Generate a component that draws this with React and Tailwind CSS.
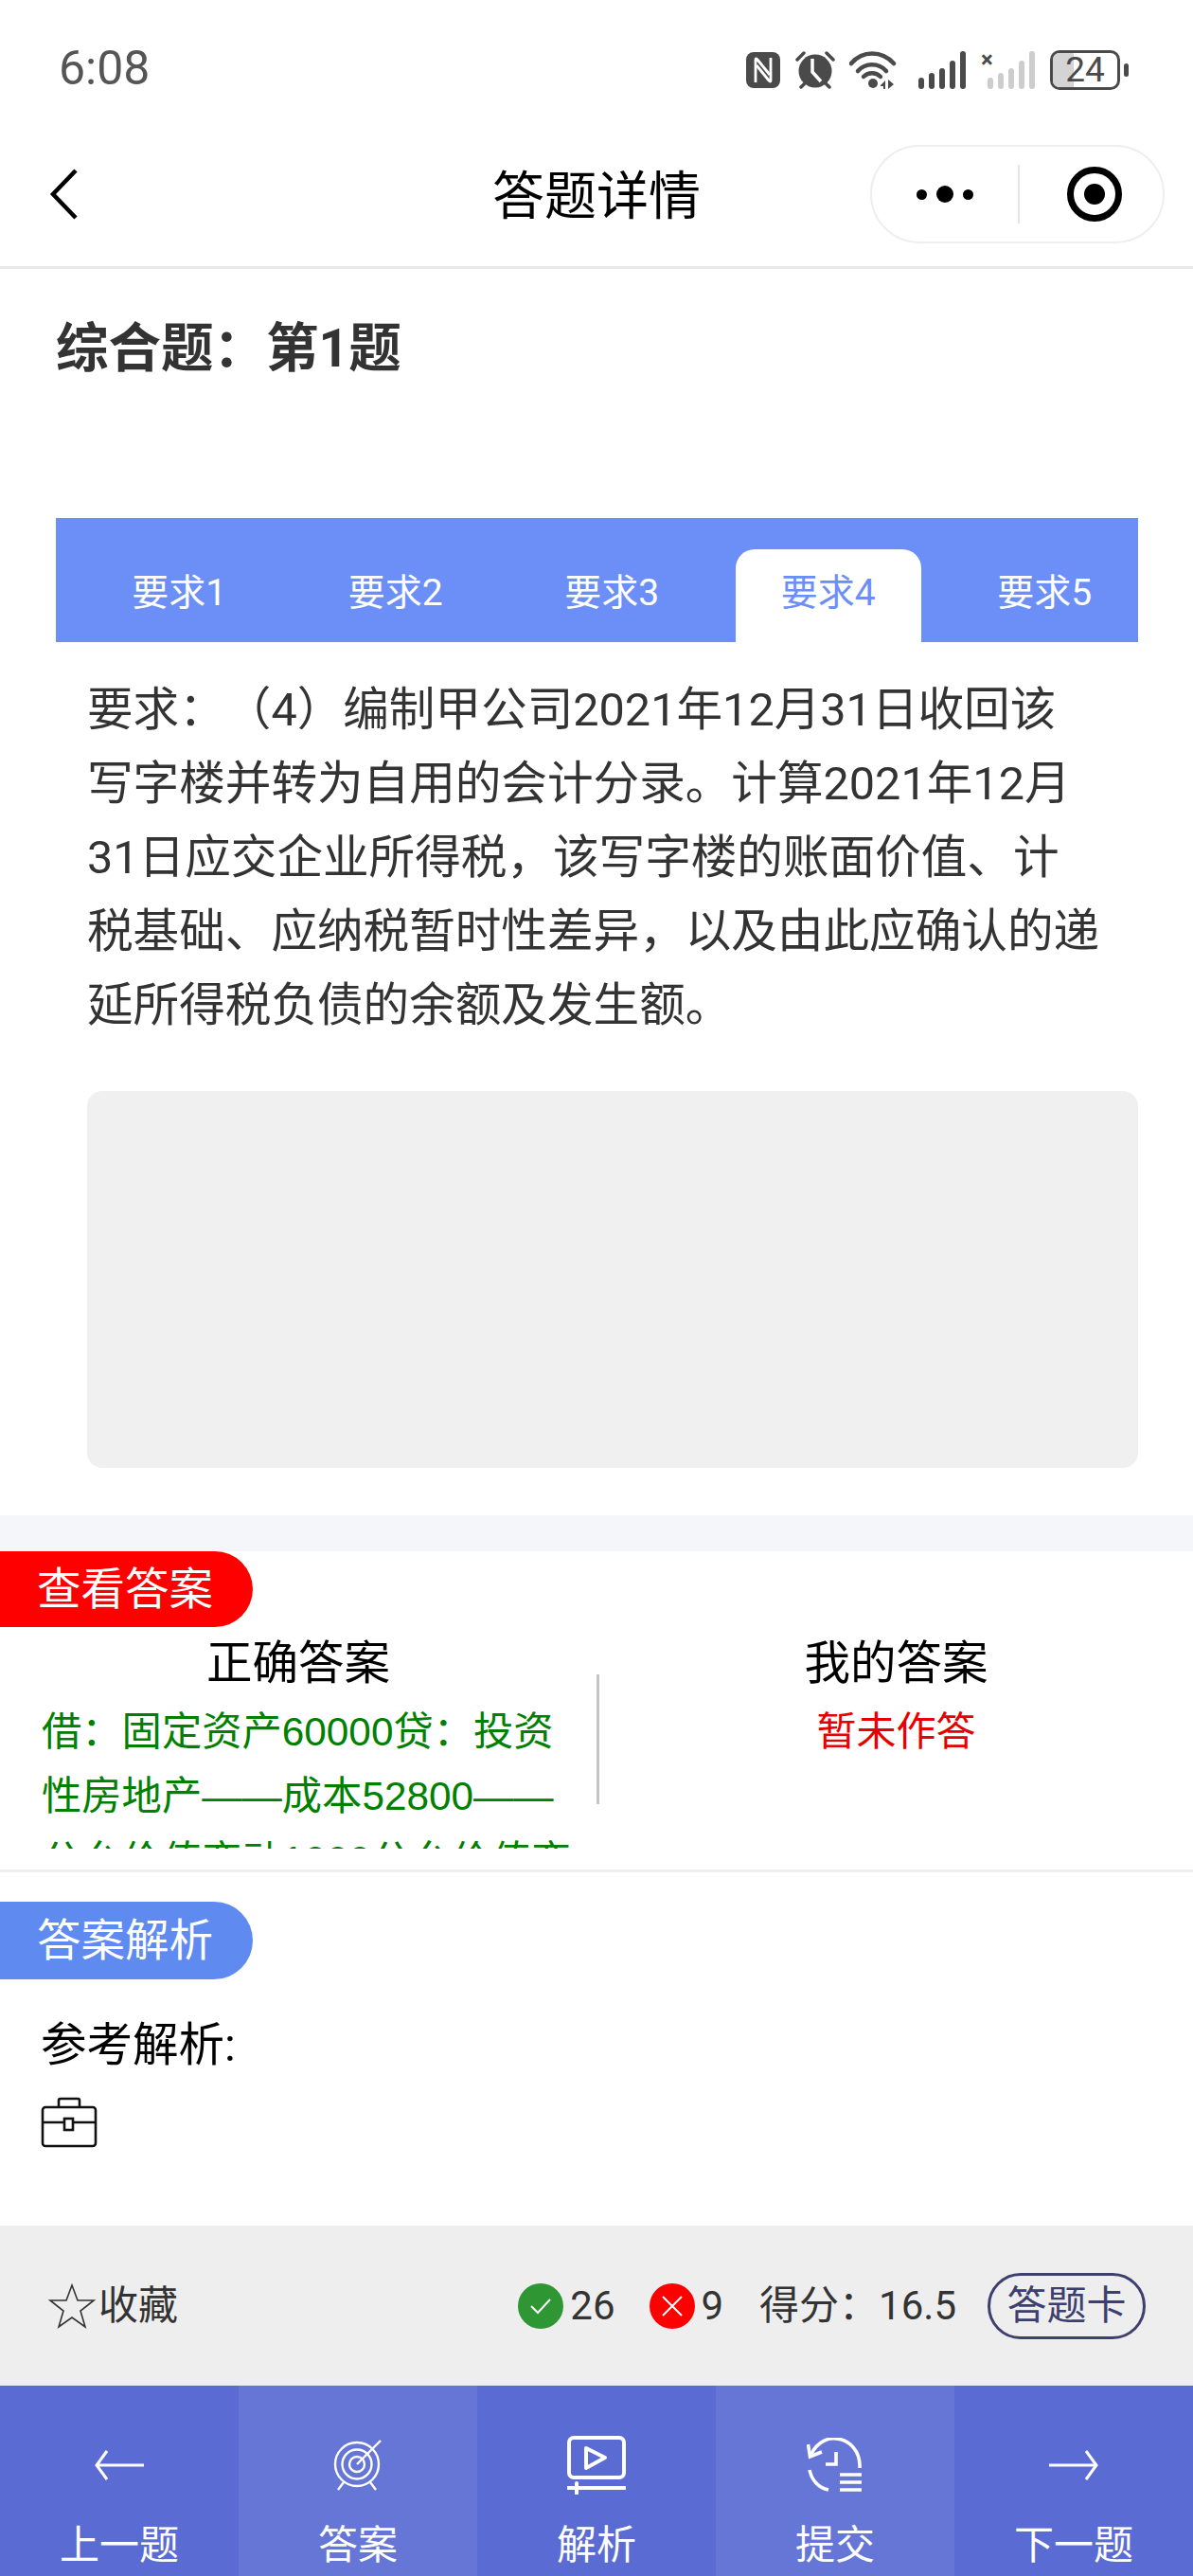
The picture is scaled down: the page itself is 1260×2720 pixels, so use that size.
const TABS = ["要求1", "要求2", "要求3", "要求4", "要求5"];

const NfcIcon = () => (
  <svg width="36" height="38" viewBox="0 0 36 38">
    <rect x="0" y="0" width="36" height="38" rx="8" fill="#4a4a4a" />
    <g fill="none" stroke="#fff" strokeWidth="2.8" strokeLinejoin="round">
      <path d="M10 32 V8 Q10 6 12 8 L25 24" />
      <path d="M26 6 V30 Q26 32 24 30 L11 14" />
    </g>
  </svg>
);

const AlarmIcon = () => (
  <svg width="42" height="40" viewBox="0 0 42 40">
    <circle cx="21" cy="21" r="17.5" fill="#4a4a4a" />
    <path d="M18 8 V22 L27 32" fill="none" stroke="#fff" strokeWidth="3.5" />
    <path d="M2 9 L9 2 M40 9 L33 2 M6 38 L10 34 M36 38 L32 34" stroke="#4a4a4a" strokeWidth="3.5" strokeLinecap="round" />
  </svg>
);

const WifiIcon = () => (
  <svg width="50" height="40" viewBox="0 0 50 40">
    <g fill="none" stroke="#4a4a4a" strokeWidth="4.5" strokeLinecap="round">
      <path d="M2 13 C14 -1 34 -1 47 13" />
      <path d="M9 21 C17 12 31 12 39 21" />
      <path d="M15 27 C20 22 28 22 33 27" />
    </g>
    <circle cx="25" cy="34" r="5" fill="#4a4a4a" />
    <path d="M33 36 L38 31 V40 H36 V37 H33 Z M41 30 V40 L47 35 Z" fill="#4a4a4a" />
  </svg>
);

const SignalIcon = ({ color = "#4a4a4a" }) => (
  <svg width="50" height="40" viewBox="0 0 50 40">
    <rect x="0" y="28" width="6" height="12" rx="3" fill={color} />
    <rect x="11" y="23" width="6" height="17" rx="3" fill={color} />
    <rect x="22" y="18" width="6" height="22" rx="3" fill={color} />
    <rect x="33" y="10" width="6" height="30" rx="3" fill={color} />
    <rect x="44" y="0" width="6" height="40" rx="3" fill={color} />
  </svg>
);

const TargetIcon = () => (
  <svg width="52" height="54" viewBox="0 0 52 54" fill="none" stroke="#fff" strokeWidth="2.4">
    <circle cx="25" cy="26" r="23" />
    <circle cx="25" cy="26" r="15.5" />
    <circle cx="25" cy="26" r="8" />
    <path d="M25 26 L50 1" />
    <path d="M11 45 L5 53 M39 45 L45 53" />
  </svg>
);

const VideoIcon = () => (
  <svg width="62" height="62" viewBox="0 0 62 62" fill="none" stroke="#fff" strokeWidth="4">
    <rect x="2" y="2" width="58" height="42" rx="5" />
    <path d="M20 13 L40 23 L20 34 Z" strokeLinejoin="round" />
    <path d="M0 55 H61" strokeLinecap="round" />
    <path d="M10 50 V61" strokeLinecap="round" />
  </svg>
);

const SubmitIcon = () => (
  <svg width="60" height="58" viewBox="0 0 60 58" fill="none" stroke="#fff" strokeWidth="3.6">
    <path d="M5 17 C12 3 24 0 31 1 C45 2 57 14 56 32" />
    <path d="M1.5 7 L3.5 20 L16 15" />
    <path d="M31 15 V28 H20" />
    <path d="M3 34 C5 44 12 53 23 55" />
    <path d="M35 39 H58 M35 47 H58 M35 55 H58" />
  </svg>
);

const NavItem = ({ label, light, children }) => (
  <div className={`flex flex-col items-center ${light ? "bg-[#6676d6]" : "bg-[#5a6bd3]"}`}>
    <div className="flex h-[139px] items-center justify-center pt-[28px]">{children}</div>
    <div className="text-[42px] leading-[60px] text-white">{label}</div>
  </div>
);

export default function App() {
  return (
    <div className="flex h-[2720px] w-[1260px] flex-col overflow-hidden bg-white font-['Roboto','Noto_Sans_CJK_SC',sans-serif] [text-spacing-trim:space-all]">
      {/* status bar */}
      <div className="flex h-[145px] items-start justify-between pl-[62px] pr-[68px] pt-[44px]">
        <div className="text-[50px] leading-[56px] text-[#555]">6:08</div>
        <div className="mt-[9px] flex items-center">
          <NfcIcon />
          <div className="ml-[16px]"><AlarmIcon /></div>
          <div className="ml-[15px]"><WifiIcon /></div>
          <div className="ml-[23px]"><SignalIcon /></div>
          <div className="relative ml-[16px] w-[57px]">
            <div className="flex justify-end"><SignalIcon color="#cdcdcd" /></div>
            <span className="absolute left-0 top-[-3px] text-[24px] font-bold leading-[24px] text-[#4a4a4a]">×</span>
          </div>
          <div className="relative ml-[16px] h-[42px] w-[74px] overflow-hidden rounded-[10px] border-[3px] border-[#4a4a4a] text-center text-[37px] leading-[36px] text-[#4a4a4a]">
            <div className="absolute inset-y-0 left-0 w-[22px] bg-[#d4d4d4]" />
            <span className="relative">24</span>
          </div>
          <div className="ml-[4px] h-[14px] w-[5px] rounded-full bg-[#4a4a4a]" />
        </div>
      </div>

      {/* nav */}
      <div className="border-b-[3px] border-[#e8e8e8] pb-[16px]">
        <div className="relative flex h-[120px] items-center justify-center">
          <svg className="absolute left-[52px] top-[33px]" width="30" height="54" viewBox="0 0 30 54" fill="none" stroke="#000" strokeWidth="4.5">
            <path d="M28 2 L4 27 L28 52" />
          </svg>
          <div className="mt-[3px] text-[55px] leading-[64px] text-black">答题详情</div>
          <div className="absolute left-[919px] top-[8px] flex h-[104px] w-[311px] items-center rounded-full border-2 border-[#eeeeee] bg-white">
            <div className="flex w-[154px] items-center justify-center gap-[10px]">
              <span className="h-[11px] w-[11px] rounded-full bg-black" />
              <span className="h-[18px] w-[18px] rounded-full bg-black" />
              <span className="h-[11px] w-[11px] rounded-full bg-black" />
            </div>
            <div className="h-[62px] w-[2px] bg-[#e5e5e5]" />
            <div className="ml-[50px] flex h-[58px] w-[58px] items-center justify-center rounded-full border-[7px] border-black">
              <span className="h-[22px] w-[22px] rounded-full bg-black" />
            </div>
          </div>
        </div>
      </div>

      {/* title */}
      <div className="ml-[59px] mt-[55px] text-[55.5px] font-bold leading-[60px] text-[#333]">综合题：第1题</div>

      {/* tabs */}
      <div className="ml-[59px] mr-[58px] mt-[148px] flex h-[131px] items-end overflow-hidden bg-[#6c8ff7] pl-[16px]">
        {TABS.map((t, i) => (
          <div key={t} className="flex w-[228.5px] shrink-0 justify-center">
            <div className={`h-[98px] w-[196px] rounded-t-[20px] pt-[19px] text-center text-[39px] leading-[54px] ${i === 3 ? "bg-white text-[#6c8ff7]" : "text-white"}`}>
              {t}
            </div>
          </div>
        ))}
      </div>

      <div className="ml-[92px] mt-[33px] w-[1070px] text-[48.6px] leading-[78px] text-[#333]">
        要求：（4）编制甲公司2021年12月31日收回该写字楼并转为自用的会计分录。计算2021年12月31日应交企业所得税，该写字楼的账面价值、计税基础、应纳税暂时性差异，以及由此应确认的递延所得税负债的余额及发生额。
      </div>

      <div className="ml-[92px] mt-[51px] h-[398px] w-[1110px] rounded-[16px] bg-[#f0f0f0]" />

      <div className="mt-[50px] h-[38px] bg-[#f5f6fa]" />

      {/* answers */}
      <div className="h-[339px] border-b-[3px] border-[#eeeeee]">
        <div className="flex h-[80px] w-[267px] items-center rounded-r-[40px] bg-[#ff0000] pl-[39px] text-[46.5px] leading-[60px] text-white">查看答案</div>
        <div className="mt-[9px] flex">
          <div className="w-[630px]">
            <div className="text-center text-[48.5px] leading-[60px] text-black">正确答案</div>
            <div className="ml-[44px] mt-[8px] h-[157px] w-[565px] overflow-hidden font-['Liberation_Sans','Noto_Sans_CJK_SC',sans-serif] text-[42.3px] leading-[68px] text-[#008000]">
              借：固定资产60000贷：投资性房地产——成本52800——公允价值变动1000公允价值变
            </div>
          </div>
          <div className="mt-[41px] h-[137px] w-[3px] bg-[#c4c4c4]" />
          <div className="flex-1 text-center">
            <div className="text-[48.5px] leading-[60px] text-black">我的答案</div>
            <div className="mt-[8px] text-[42px] leading-[68px] text-[#e60000]">暂未作答</div>
          </div>
        </div>
      </div>

      {/* analysis */}
      <div className="mt-[31px] flex h-[82px] w-[267px] items-center rounded-r-full bg-[#5f8bf0] pl-[39px] text-[46.5px] leading-[60px] text-white">答案解析</div>
      <div className="ml-[43px] mt-[40px] text-[48.5px] leading-[60px] text-black">参考解析:</div>
      <svg className="ml-[43px] mt-[24px]" width="60" height="54" viewBox="0 0 60 54" fill="none" stroke="#111" strokeWidth="2.6">
        <rect x="2" y="11" width="56" height="41" rx="3" />
        <path d="M19 11 V4 Q19 2 21 2 H39 Q41 2 41 4 V11" />
        <path d="M2 27 H25 M35 27 H58" />
        <rect x="25" y="23" width="9" height="12" />
      </svg>

      {/* footer */}
      <div className="mt-auto">
        <div className="flex h-[169px] items-center justify-between bg-[#eeeeee] pl-[51px] pr-[50px] text-[42px] leading-[56px] text-[#333]">
          <div className="flex items-center">
            <svg width="50" height="48" viewBox="0 0 50 48" fill="none" stroke="#333" strokeWidth="1.6">
              <path d="M25 2 L31 18 L48 18 L34 29 L39 46 L25 36 L11 46 L16 29 L2 18 L19 18 Z" />
            </svg>
            <span className="ml-[3px]">收藏</span>
          </div>
          <div className="flex items-center">
            <div className="flex h-[48px] w-[48px] items-center justify-center rounded-full bg-[#2e9632]">
              <svg width="24" height="20" viewBox="0 0 24 20" fill="none" stroke="#fff" strokeWidth="2"><path d="M2 10 L9 17 L22 3" /></svg>
            </div>
            <span className="ml-[7px]">26</span>
            <div className="ml-[36px] flex h-[48px] w-[48px] items-center justify-center rounded-full bg-[#ff0000]">
              <svg width="26" height="26" viewBox="0 0 26 26" fill="none" stroke="#fff" strokeWidth="2"><path d="M3 3 L23 23 M23 3 L3 23" /></svg>
            </div>
            <span className="ml-[7px]">9</span>
            <span className="ml-[38px]">得分：16.5</span>
            <div className="ml-[33px] flex h-[70px] w-[167px] items-center justify-center rounded-full border-[3px] border-[#3d3f6e] text-[#3d3f6e]">答题卡</div>
          </div>
        </div>
        <div className="grid h-[201px] grid-cols-5">
          <NavItem label="上一题">
            <svg width="54" height="36" viewBox="0 0 54 36" fill="none" stroke="#fff" strokeWidth="3"><path d="M53 18 H3 M14 3 L3 18 L14 33" /></svg>
          </NavItem>
          <NavItem label="答案" light><TargetIcon /></NavItem>
          <NavItem label="解析"><VideoIcon /></NavItem>
          <NavItem label="提交" light><SubmitIcon /></NavItem>
          <NavItem label="下一题">
            <svg width="54" height="36" viewBox="0 0 54 36" fill="none" stroke="#fff" strokeWidth="3"><path d="M1 18 H51 M40 3 L51 18 L40 33" /></svg>
          </NavItem>
        </div>
      </div>
    </div>
  );
}
